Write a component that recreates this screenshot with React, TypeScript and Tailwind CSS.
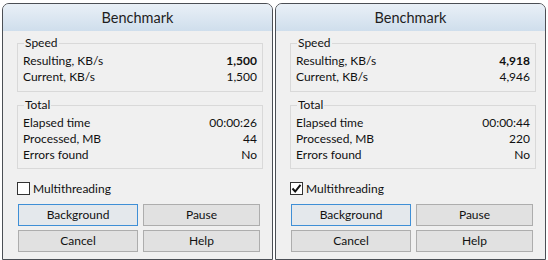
import React from "react";

type Props = {
  resulting: string;
  current: string;
  elapsed: string;
  processed: string;
  errors: string;
  multi: boolean;
};

function Row({ label, value, bold }: { label: string; value: string; bold?: boolean }) {
  return (
    <div className="flex h-[16px] items-center justify-between">
      <span>{label}</span>
      <span className={bold ? "font-bold" : ""}>{value}</span>
    </div>
  );
}

function Btn({ children, def }: { children: React.ReactNode; def?: boolean }) {
  return (
    <div
      className={
        "flex h-[22px] items-center justify-center border " +
        (def ? "border-[#3f8fd6] bg-[#e4e8ec]" : "border-[#adadad] bg-[#e1e1e1]")
      }
    >
      {children}
    </div>
  );
}

function Win(p: Props) {
  return (
    <div className="flex h-[257px] w-[271px] flex-col overflow-hidden rounded-t-[7px] border border-[#4b4f55] bg-[#f0f0f0]">
      <div className="flex h-[27px] items-center justify-center bg-gradient-to-b from-[#e9f0f7] to-[#cfdeec] pt-[1px] text-[14.5px] text-[#1e1e1e]">
        Benchmark
      </div>
      <div className="flex flex-col pt-[4px] text-[12px] text-[#111]">
        <fieldset className="ml-[14px] mr-[9px] border border-[#d9d9d9] px-[5px] pb-[6px] pt-[2px]">
          <legend className="ml-[1px] h-[16px] px-[1px] leading-[16px]">Speed</legend>
          <Row label="Resulting, KB/s" value={p.resulting} bold />
          <Row label="Current, KB/s" value={p.current} />
        </fieldset>
        <fieldset className="ml-[14px] mr-[9px] mt-[5px] border border-[#d9d9d9] px-[5px] pb-[5px] pt-[2px]">
          <legend className="ml-[1px] h-[16px] px-[1px] leading-[16px]">Total</legend>
          <Row label="Elapsed time" value={p.elapsed} />
          <Row label="Processed, MB" value={p.processed} />
          <Row label="Errors found" value={p.errors} />
        </fieldset>
        <div className="ml-[14px] mt-[13px] flex h-[13px] items-center gap-[3px]">
          <div className="flex h-[13px] w-[13px] items-center justify-center border border-[#333] bg-white">
            {p.multi && (
              <svg width="11" height="11" viewBox="0 0 11 11">
                <path d="M1.5 5.5 L4.2 8.5 L9.5 1.8" fill="none" stroke="#111" strokeWidth="2" />
              </svg>
            )}
          </div>
          <span>Multithreading</span>
        </div>
        <div className="ml-[15px] mr-[12px] mt-[9px] grid grid-cols-[120px_1fr] gap-x-[5px] gap-y-[4px]">
          <Btn def>Background</Btn>
          <Btn>Pause</Btn>
          <Btn>Cancel</Btn>
          <Btn>Help</Btn>
        </div>
      </div>
    </div>
  );
}

export default function App() {
  return (
    <div
      className="flex h-[260px] w-[548px] gap-[2px] bg-white pl-[2px] pt-[3px]"
      style={{ fontFamily: 'Lato, "Open Sans", sans-serif' }}
    >
      <Win resulting="1,500" current="1,500" elapsed="00:00:26" processed="44" errors="No" multi={false} />
      <Win resulting="4,918" current="4,946" elapsed="00:00:44" processed="220" errors="No" multi />
    </div>
  );
}
